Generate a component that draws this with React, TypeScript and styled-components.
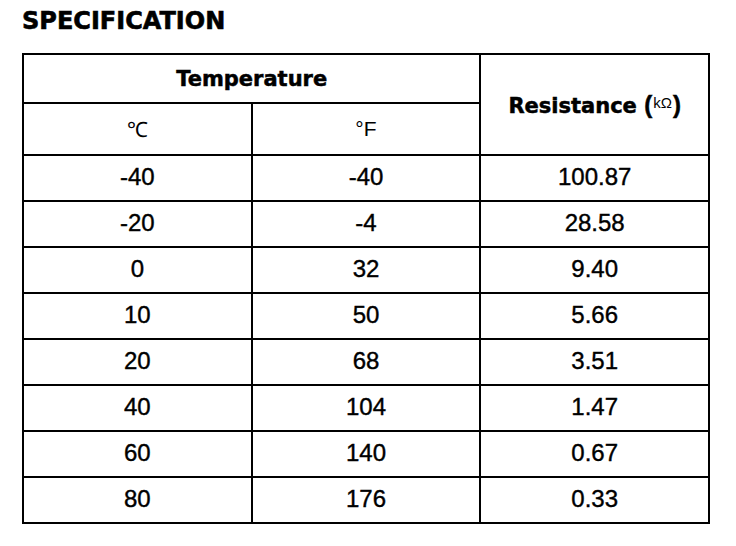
import { createGlobalStyle, styled } from "styled-components";

const rows: [string, string, string][] = [
  ["-40", "-40", "100.87"],
  ["-20", "-4", "28.58"],
  ["0", "32", "9.40"],
  ["10", "50", "5.66"],
  ["20", "68", "3.51"],
  ["40", "104", "1.47"],
  ["60", "140", "0.67"],
  ["80", "176", "0.33"],
];

const App = () => {
  return (
    <>
      <GlobalStyle />
      <Page>
        <Title>SPECIFICATION</Title>
        <SpecTable>
          <colgroup>
            <col />
            <col />
            <col />
          </colgroup>
          <thead>
            <tr>
              <HeadCell colSpan={2} $height={47}>
                Temperature
              </HeadCell>
              <HeadCell rowSpan={2}>
                Resistance <Paren>(</Paren>
                <Unit>kΩ</Unit>
                <Paren>)</Paren>
              </HeadCell>
            </tr>
            <tr>
              <UnitCell $height={50}>℃</UnitCell>
              <UnitCell $height={50}>°F</UnitCell>
            </tr>
          </thead>
          <tbody>
            {rows.map(([c, f, r]) => (
              <tr key={c}>
                <Cell>{c}</Cell>
                <Cell>{f}</Cell>
                <Cell>{r}</Cell>
              </tr>
            ))}
          </tbody>
        </SpecTable>
      </Page>
    </>
  );
};

const GlobalStyle = createGlobalStyle`
  body {
    margin: 0;
    background: #fff;
    color: #000;
  }
`;

const Page = styled.div`
  padding: 7px 0 0 22px;
`;

const Title = styled.h1`
  margin: 0 0 18px;
  font-family: "DejaVu Sans", sans-serif;
  font-weight: bold;
  font-size: 24px;
  line-height: 28px;
  -webkit-text-stroke: 0.6px #000;
`;

const SpecTable = styled.table`
  width: 688px;
  table-layout: fixed;
  border-collapse: collapse;
  border: 2px solid #000;

  col {
    width: 33.33%;
  }
`;

const HeadCell = styled.th<{ $height?: number }>`
  height: ${(p) => (p.$height ? `${p.$height}px` : "auto")};
  padding: 0;
  border: 2px solid #000;
  font-family: "DejaVu Sans", sans-serif;
  font-weight: bold;
  font-size: 21px;
  text-align: center;
  vertical-align: middle;
  white-space: nowrap;
  -webkit-text-stroke: 0.5px #000;
`;

const Paren = styled.span`
  font-family: "Liberation Sans", sans-serif;
  font-size: 24px;
  font-weight: bold;
`;

const Unit = styled.span`
  font-family: "Liberation Sans", sans-serif;
  font-weight: normal;
  font-size: 15px;
  position: relative;
  top: -5px;
  padding: 0 1px;
  -webkit-text-stroke: 0;
`;

const UnitCell = styled.td<{ $height: number }>`
  height: ${(p) => p.$height}px;
  padding: 0;
  border: 2px solid #000;
  font-family: "Liberation Sans", sans-serif;
  font-size: 21px;
  text-align: center;
  vertical-align: middle;
`;

const Cell = styled.td`
  height: 46px;
  padding: 0 0 3px;
  box-sizing: border-box;
  border: 2px solid #000;
  font-family: "Liberation Sans", sans-serif;
  font-size: 24px;
  text-align: center;
  vertical-align: middle;
  -webkit-text-stroke: 0.4px #000;
`;

export default App;
